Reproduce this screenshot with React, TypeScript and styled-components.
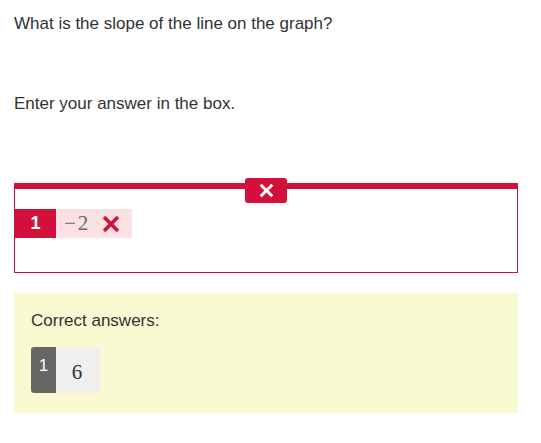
import React from 'react';
import styled, { createGlobalStyle } from 'styled-components';

const GlobalStyle = createGlobalStyle`
  body {
    margin: 0;
    background: #fff;
    color: #333;
    font-family: 'Liberation Sans', Arial, sans-serif;
    font-size: 17px;
  }
`;

interface Answer {
  index: number;
  value: string;
}

const given: Answer = { index: 1, value: '\u22122' };
const correct: Answer[] = [{ index: 1, value: '6' }];

const Cross: React.FC<{ size: number; color: string; weight: number }> = ({ size, color, weight }) => (
  <svg width={size} height={size} viewBox='0 0 16 16' aria-hidden='true'>
    <path d='M1.8 1.8 L14.2 14.2 M14.2 1.8 L1.8 14.2' stroke={color} strokeWidth={weight} strokeLinecap='butt' fill='none' />
  </svg>
);

const App: React.FC = () => {
  return (
    <Page>
      <GlobalStyle />
      <Prompt>What is the slope of the line on the graph?</Prompt>
      <Instruction>Enter your answer in the box.</Instruction>

      <Response>
        <WrongBadge>
          <Cross size={15} color='#fff' weight={3.2} />
        </WrongBadge>
        <ChipRow>
          <Chip>
            <ChipIndex tone='wrong'>{given.index}</ChipIndex>
            <ChipValue tone='wrong'>
              <MathText>{given.value}</MathText>
              <Cross size={18} color='#d3103b' weight={3.2} />
            </ChipValue>
          </Chip>
        </ChipRow>
      </Response>

      <Correct>
        <CorrectLabel>Correct answers:</CorrectLabel>
        {correct.map((a) => (
          <Chip key={a.index}>
            <ChipIndex tone='key'>{a.index}</ChipIndex>
            <ChipValue tone='key'>
              <MathText dark>{a.value}</MathText>
            </ChipValue>
          </Chip>
        ))}
      </Correct>
    </Page>
  );
};

const Page = styled.div`
  width: 504px;
  padding: 15px 0 0 14px;
`;

const Prompt = styled.p`
  margin: 0;
  line-height: 18px;
`;

const Instruction = styled.p`
  margin: 62px 0 0;
  line-height: 18px;
`;

const Response = styled.div`
  position: relative;
  margin-top: 70px;
  height: 83px;
  border: 1px solid #b8163f;
  border-top: 6px solid #d3103b;
`;

const WrongBadge = styled.div`
  position: absolute;
  top: -11px;
  left: 50%;
  transform: translateX(-50%);
  width: 42px;
  height: 25px;
  border-radius: 3px;
  background: #d3103b;
  display: flex;
  align-items: center;
  justify-content: center;
`;

const ChipRow = styled.div`
  display: flex;
  padding-top: 20px;
`;

const Chip = styled.div`
  display: inline-flex;
  align-items: stretch;
`;

const ChipIndex = styled.span<{ tone: 'wrong' | 'key' }>`
  display: flex;
  justify-content: center;
  color: #fff;
  ${(p) =>
    p.tone === 'wrong'
      ? `
    width: 41px;
    height: 29px;
    align-items: center;
    background: #d3103b;
    font-weight: bold;
    font-size: 18px;
  `
      : `
    width: 25px;
    height: 46px;
    padding-top: 9px;
    box-sizing: border-box;
    background: #666;
    border-radius: 3px 0 0 3px;
    font-size: 17px;
  `}
`;

const ChipValue = styled.span<{ tone: 'wrong' | 'key' }>`
  display: flex;
  align-items: center;
  ${(p) =>
    p.tone === 'wrong'
      ? `
    width: 76px;
    height: 29px;
    padding-left: 8px;
    gap: 12px;
    box-sizing: border-box;
    background: #fbe1e3;
  `
      : `
    width: 44px;
    height: 46px;
    justify-content: center;
    padding-top: 4px;
    box-sizing: border-box;
    background: #efefef;
  `}
`;

const MathText = styled.span<{ dark?: boolean }>`
  font-family: 'Liberation Serif', 'Times New Roman', serif;
  font-size: 21px;
  letter-spacing: 2px;
  color: ${(p) => (p.dark ? '#333' : '#6a6a6a')};
`;

const Correct = styled.div`
  margin-top: 20px;
  height: 120px;
  box-sizing: border-box;
  padding: 19px 17px 20px;
  background: #fafad2;
`;

const CorrectLabel = styled.div`
  line-height: 18px;
  margin-bottom: 17px;
`;

export default App;
